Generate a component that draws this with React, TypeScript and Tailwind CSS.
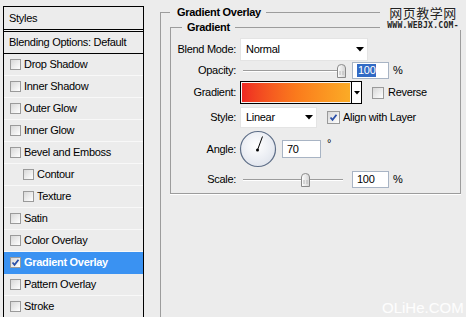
import React from 'react';

const font = "font-['Liberation_Sans','Arial',sans-serif]";

const STYLE_ROWS: { label: string; indent?: boolean; active?: boolean }[] = [
  { label: 'Drop Shadow' },
  { label: 'Inner Shadow' },
  { label: 'Outer Glow' },
  { label: 'Inner Glow' },
  { label: 'Bevel and Emboss' },
  { label: 'Contour', indent: true },
  { label: 'Texture', indent: true },
  { label: 'Satin' },
  { label: 'Color Overlay' },
  { label: 'Gradient Overlay', active: true },
  { label: 'Pattern Overlay' },
  { label: 'Stroke' },
];

function Check({ checked = false, size = 'w-[11px] h-[11px]' }: { checked?: boolean; size?: string }) {
  return (
    <span className={`${size} shrink-0 border border-[#9a9a9a] bg-gradient-to-br from-[#d8d8d8] to-white flex items-center justify-center`}>
      {checked && (
        <svg width="9" height="9" viewBox="0 0 9 9">
          <path d="M1.5 4.5 L3.5 6.8 L7.5 1.8" fill="none" stroke="#2a4fa8" strokeWidth="1.8" />
        </svg>
      )}
    </span>
  );
}

function Arrow() {
  return (
    <svg width="8" height="5" viewBox="0 0 8 5">
      <path d="M0 0 H8 L4 4.5 Z" fill="#000" />
    </svg>
  );
}

function Slider({ pos }: { pos: number }) {
  return (
    <div className="relative w-[108px] h-[16px] flex items-center">
      <div className="ml-[3px] w-[100px] h-[2px] border-t border-[#9c9c9c] border-b border-b-white" />
      <svg className="absolute top-[1px]" style={{ left: pos }} width="9" height="14" viewBox="0 0 9 14">
        <defs>
          <linearGradient id={`th${pos}`} x1="0" y1="0" x2="1" y2="0">
            <stop offset="0" stopColor="#ffffff" />
            <stop offset="1" stopColor="#d4d4d4" />
          </linearGradient>
        </defs>
        <path d="M0.5 4 Q0.5 0.5 4.5 0.5 Q8.5 0.5 8.5 4 V13.5 H0.5 Z" fill={`url(#th${pos})`} stroke="#8a8a8a" />
        <path d="M3 7 V11 M6 7 V11" stroke="#b8b8b8" />
      </svg>
    </div>
  );
}

function Field({ value, selected = false, w = 'w-[37px]', h = 'h-[17px]' }: { value: string; selected?: boolean; w?: string; h?: string }) {
  return (
    <div className={`${w} ${h} bg-white border border-[#a8b4c4] flex items-center pl-[4px]`}>
      <span className={selected ? 'bg-[#316ac5] text-white leading-[13px] px-[1px]' : 'leading-[13px]'}>{value}</span>
    </div>
  );
}

function Dial() {
  return (
    <svg width="38" height="38" viewBox="0 0 38 38">
      <defs>
        <radialGradient id="dialbg" cx="0.45" cy="0.4" r="0.6">
          <stop offset="0" stopColor="#ffffff" />
          <stop offset="1" stopColor="#e2e6ee" />
        </radialGradient>
      </defs>
      <circle cx="19" cy="19" r="17.5" fill="url(#dialbg)" stroke="#5f6f88" strokeWidth="1.2" />
      <line x1="18.5" y1="20" x2="23.5" y2="6.5" stroke="#000" strokeWidth="1" />
      <circle cx="18.5" cy="20" r="1.5" fill="#000" />
    </svg>
  );
}

export default function App() {
  return (
    <div className={`${font} text-[11px] tracking-[-0.3px] text-black relative w-[466px] h-[317px] overflow-hidden bg-[#ececec] flex items-start pt-[6px] pl-[3px]`}>
      {/* Styles list */}
      <div className="w-[141px] h-[320px] shrink-0 border border-black bg-[#ececec]">
        <div className="h-[23px] border-b border-black flex items-center pl-[5px]">Styles</div>
        <div className="h-[1px] bg-[#f4f4f4]" />
        <div className="h-[23px] border-y border-black flex items-center pl-[5px]">Blending Options: Default</div>
        {STYLE_ROWS.map((r) => (
          <div
            key={r.label}
            className={`h-[22px] flex items-center gap-[3px] border-b ${
              r.active ? 'bg-[#3a92f2] border-[#3a92f2] text-white font-bold' : 'border-[#f8f8f8]'
            } ${r.indent ? 'pl-[19px]' : 'pl-[6px]'}`}
          >
            <Check checked={r.active} />
            <span>{r.label}</span>
          </div>
        ))}
      </div>

      {/* Options */}
      <fieldset className="ml-[16px] -mt-[1px] w-[330px] h-[330px] shrink-0 border border-[#9c9c9c] pl-[9px]">
        <legend className="font-bold leading-[14px] pl-[7px] pr-[5px]">Gradient Overlay</legend>
        <fieldset className="mt-[1px] w-[291px] border border-[#9c9c9c] shadow-[0_1px_0_#ffffff] pb-[4px]">
          <legend className="font-bold leading-[14px] ml-[11px] px-[5px]">Gradient</legend>

          <div className="mt-[4px] h-[23px] flex items-center">
            <span className="w-[65px] text-right mr-[4px]">Blend Mode:</span>
            <div className="w-[128px] h-[23px] bg-white border border-[#e4e4e4] flex items-center justify-between pl-[5px] pr-[3px]">
              <span>Normal</span>
              <Arrow />
            </div>
          </div>

          <div className="h-[19px] flex items-center">
            <span className="w-[65px] text-right mr-[4px]">Opacity:</span>
            <Slider pos={97} />
            <div className="ml-[4px]">
              <Field value="100" selected />
            </div>
            <span className="ml-[4px]">%</span>
          </div>

          <div className="mt-[1px] h-[23px] flex items-center">
            <span className="w-[65px] text-right mr-[4px]">Gradient:</span>
            <div className="w-[122px] h-[23px] flex border border-black">
              <div className="flex-1 border border-[#f4f4f4] bg-gradient-to-r from-[#ee2722] via-[#fa7a1c] to-[#fbab26]" />
              <div className="w-[10px] bg-white border-l border-black flex items-center justify-center">
                <svg width="6" height="4" viewBox="0 0 6 4">
                  <path d="M0 0 H6 L3 3.5 Z" fill="#000" />
                </svg>
              </div>
            </div>
            <span className="ml-[10px]">
              <Check size="w-[12px] h-[12px]" />
            </span>
            <span className="ml-[4px]">Reverse</span>
          </div>

          <div className="mt-[3px] h-[21px] flex items-center">
            <span className="w-[65px] text-right mr-[4px]">Style:</span>
            <div className="w-[77px] h-[21px] bg-white border border-[#e4e4e4] flex items-center justify-between pl-[5px] pr-[3px]">
              <span>Linear</span>
              <Arrow />
            </div>
            <span className="ml-[10px]">
              <Check checked size="w-[13px] h-[13px]" />
            </span>
            <span className="ml-[3px]">Align with Layer</span>
          </div>

          <div className="mt-[1px] h-[40px] flex items-center">
            <span className="w-[65px] text-right mr-[3px]">Angle:</span>
            <Dial />
            <div className="ml-[5px]">
              <Field value="70" w="w-[39px]" h="h-[18px]" />
            </div>
            <span className="ml-[6px] self-start mt-[9px] leading-[10px]">°</span>
          </div>

          <div className="mt-[1px] h-[19px] flex items-center">
            <span className="w-[65px] text-right mr-[4px]">Scale:</span>
            <Slider pos={61} />
            <div className="ml-[4px]">
              <Field value="100" />
            </div>
            <span className="ml-[4px]">%</span>
          </div>
        </fieldset>
      </fieldset>

      {/* watermarks */}
      <div className="absolute left-[380px] top-[4px] w-[86px] flex flex-col items-center bg-[#ececec] tracking-normal">
        <span className="font-['Noto_Sans_CJK_SC',sans-serif] text-[13px] leading-[17px] tracking-[0.5px] text-[#222] [text-shadow:0_0_1px_#fff]">网页教学网</span>
        <span className="font-['DejaVu_Sans_Mono',monospace] font-bold text-[8px] leading-[9px] tracking-[0.3px] text-[#222]">WWW.WEBJX.COM-</span>
      </div>
      <span className="absolute left-[382px] top-[299px] font-['Liberation_Sans',sans-serif] text-[15px] leading-[17px] tracking-normal text-white/90">OLiHe.COM</span>
    </div>
  );
}
